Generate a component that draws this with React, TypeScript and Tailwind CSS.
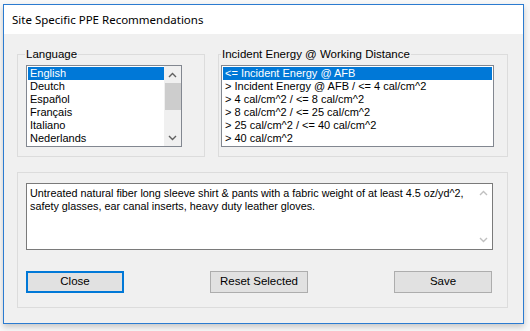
import React from 'react';

const LANGUAGES = ['English', 'Deutch', 'Español', 'Français', 'Italiano', 'Nederlands'];
const ENERGIES = [
  '<= Incident Energy @ AFB',
  '> Incident Energy @ AFB / <= 4 cal/cm^2',
  '> 4 cal/cm^2 / <= 8 cal/cm^2',
  '> 8 cal/cm^2 / <= 25 cal/cm^2',
  '> 25 cal/cm^2 / <= 40 cal/cm^2',
  '> 40 cal/cm^2',
];

function Chevron({ up, color }: { up?: boolean; color: string }) {
  return (
    <svg width="9" height="6" viewBox="0 0 9 6">
      <path d={up ? 'M1 5 L4.5 1.5 L8 5' : 'M1 1 L4.5 4.5 L8 1'} fill="none" stroke={color} strokeWidth="1.4" />
    </svg>
  );
}

function GroupBox({
  label,
  className,
  legendClass = '',
  children,
}: {
  label?: string;
  className: string;
  legendClass?: string;
  children: React.ReactNode;
}) {
  return (
    <fieldset className={`border border-[#dcdcdc] ${className}`}>
      {label && <legend className={`text-[11.5px] leading-[13px] ${legendClass}`}>{label}</legend>}
      {children}
    </fieldset>
  );
}

function Button({ label, focused }: { label: string; focused?: boolean }) {
  return (
    <div
      className={`w-[98px] h-[22px] flex items-center justify-center bg-[#e1e1e1] text-[11.5px] ${
        focused ? 'border-2 border-[#0078d7]' : 'border border-[#adadad]'
      }`}
    >
      {label}
    </div>
  );
}

export default function App() {
  return (
    <div className="w-[530px] h-[331px] bg-[#f8f8f8] pl-[3px] pt-[4px] font-['Liberation_Sans',Arial,sans-serif] text-black">
      <div className="w-[521px] h-[320px] border border-[#2b7bd0] bg-[#f0f0f0] flex flex-col shadow-[0_3px_6px_rgba(0,0,0,0.2)]">
        {/* Title bar */}
        <div className="h-[29px] shrink-0 bg-white flex items-center pl-[8px] text-[11.5px] font-['Noto_Sans',sans-serif]">
          Site Specific PPE Recommendations
        </div>

        <div className="flex flex-col pl-[13px] pt-[14px]">
          <div className="flex gap-[13px]">
            {/* Language */}
            <GroupBox label="Language" className="w-[188px] pl-[8px] pb-[9px]" legendClass="-ml-[1px] px-[1px]">
              <div className="mt-[4px] w-[156px] h-[82px] border border-[#828790] bg-white flex text-[11px] leading-[13px]">
                <div className="flex-1 pt-[1px] pl-[1px]">
                  {LANGUAGES.map((l, i) => (
                    <div key={l} className={`h-[13px] pl-[2px] ${i === 0 ? 'bg-[#0078d7] text-white' : ''}`}>
                      {l}
                    </div>
                  ))}
                </div>
                <div className="w-[17px] flex flex-col items-center bg-[#f0f0f0]">
                  <div className="h-[17px] flex items-center justify-center"><Chevron up color="#606060" /></div>
                  <div className="w-[16px] h-[27px] bg-[#cdcdcd]" />
                  <div className="flex-1" />
                  <div className="h-[17px] flex items-center justify-center"><Chevron color="#606060" /></div>
                </div>
              </div>
            </GroupBox>

            {/* Incident energy */}
            <GroupBox
              label="Incident Energy @ Working Distance"
              className="w-[290px] pl-[2px] pb-[9px]"
              legendClass="ml-0 px-[1px]"
            >
              <div className="mt-[4px] w-[273px] h-[82px] border border-[#828790] bg-white p-[1px] text-[11px] leading-[13px]">
                {ENERGIES.map((e, i) => (
                  <div key={e} className={`h-[13px] pl-[2px] whitespace-nowrap ${i === 0 ? 'bg-[#0078d7] text-white' : ''}`}>
                    {e}
                  </div>
                ))}
              </div>
            </GroupBox>
          </div>

          {/* Recommendation */}
          <GroupBox className="mt-[15px] w-[491px] pl-[8px] pt-[10px] pb-[14px]">
            <div className="w-[467px] h-[67px] border border-[#7a7a7a] bg-white flex">
              <div className="flex-1 pl-[3px] pt-[3px] text-[10.8px] leading-[13px]">
                Untreated natural fiber long sleeve shirt &amp; pants with a fabric weight of at least 4.5 oz/yd^2,
                safety glasses, ear canal inserts, heavy duty leather gloves.
              </div>
              <div className="w-[17px] flex flex-col items-center justify-between py-[6px]">
                <Chevron up color="#c0c0c0" />
                <Chevron color="#c0c0c0" />
              </div>
            </div>
            <div className="mt-[21px] w-[466px] flex justify-between">
              <Button label="Close" focused />
              <Button label="Reset Selected" />
              <Button label="Save" />
            </div>
          </GroupBox>
        </div>
      </div>
    </div>
  );
}
